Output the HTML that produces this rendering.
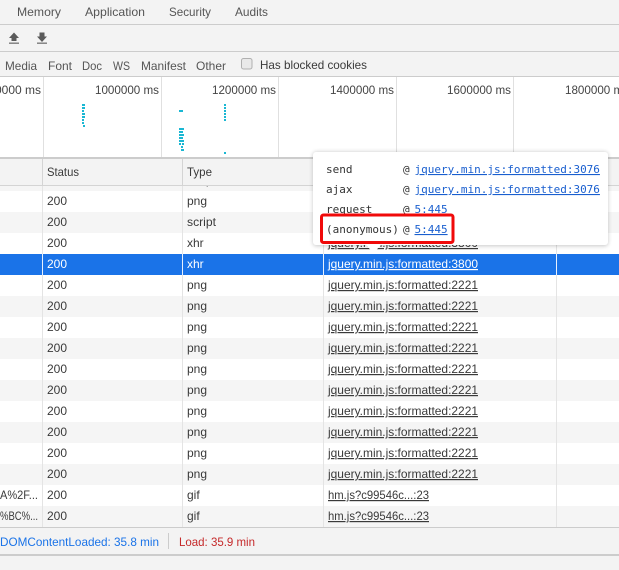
<!DOCTYPE html>
<html>
<head>
<meta charset="utf-8">
<style>
html,body{margin:0;padding:0;background:#f3f3f3;width:619px;height:570px;overflow:hidden}
svg{display:block}
text{font-family:"Liberation Sans",sans-serif;font-size:12px;fill:#444}
.t{fill:#3a3a3a}
.tab{fill:#555}
.u{text-decoration:underline;fill:#3a3a3a}
.m{font-family:"DejaVu Sans Mono",monospace;font-size:11px;fill:#333}
.l{font-family:"DejaVu Sans Mono",monospace;font-size:11px;fill:#1a5fcf;text-decoration:underline}
.w{fill:#fff}
</style>
</head>
<body>
<svg width="619" height="570" viewBox="0 0 619 570" xmlns="http://www.w3.org/2000/svg">
<defs>
<filter id="s" x="-10%" y="-20%" width="120%" height="140%"><feGaussianBlur stdDeviation="2"/></filter>
</defs>
<rect width="619" height="570" fill="#f3f3f3"/>

<!-- top tabs -->
<text class="tab" x="17" y="16" textLength="44" lengthAdjust="spacingAndGlyphs">Memory</text>
<text class="tab" x="85" y="16" textLength="60" lengthAdjust="spacingAndGlyphs">Application</text>
<text class="tab" x="169" y="16" textLength="42" lengthAdjust="spacingAndGlyphs">Security</text>
<text class="tab" x="235" y="16" textLength="33" lengthAdjust="spacingAndGlyphs">Audits</text>
<rect x="0" y="24" width="619" height="1" fill="#ccc"/>

<!-- toolbar -->
<path d="M14 32.5L19 38H16.5V41H11.5V38H9Z" fill="#5a5a5a"/>
<rect x="9" y="42.6" width="10" height="1.1" fill="#5a5a5a"/>
<path d="M39.5 32.5H44.5V36.5H47L42 42L37 36.5H39.5Z" fill="#5a5a5a"/>
<rect x="37" y="42.6" width="10" height="1.1" fill="#5a5a5a"/>
<rect x="0" y="51" width="619" height="1" fill="#ccc"/>

<!-- filter bar -->
<text class="tab" x="5" y="70" textLength="32" lengthAdjust="spacingAndGlyphs">Media</text>
<text class="tab" x="48" y="70" textLength="24" lengthAdjust="spacingAndGlyphs">Font</text>
<text class="tab" x="82" y="70" textLength="20" lengthAdjust="spacingAndGlyphs">Doc</text>
<text class="tab" x="113" y="70" textLength="17" lengthAdjust="spacingAndGlyphs">WS</text>
<text class="tab" x="141" y="70" textLength="45" lengthAdjust="spacingAndGlyphs">Manifest</text>
<text class="tab" x="196" y="70" textLength="30" lengthAdjust="spacingAndGlyphs">Other</text>
<rect x="241.5" y="58.5" width="10.5" height="10.5" rx="2" fill="#e9e9e9" stroke="#b0b0b0"/>
<text class="t" x="260" y="69" textLength="107" lengthAdjust="spacingAndGlyphs">Has blocked cookies</text>
<rect x="0" y="76" width="619" height="1" fill="#ccc"/>

<!-- timeline -->
<rect x="0" y="77" width="619" height="80" fill="#fff"/>
<g fill="#e0e0e0">
<rect x="43" y="77" width="1" height="80"/>
<rect x="161" y="77" width="1" height="80"/>
<rect x="278" y="77" width="1" height="80"/>
<rect x="396" y="77" width="1" height="80"/>
<rect x="513" y="77" width="1" height="80"/>
</g>
<text x="41" y="94" text-anchor="end">0000 ms</text>
<text x="95" y="94" textLength="64" lengthAdjust="spacingAndGlyphs">1000000 ms</text>
<text x="212" y="94" textLength="64" lengthAdjust="spacingAndGlyphs">1200000 ms</text>
<text x="330" y="94" textLength="64" lengthAdjust="spacingAndGlyphs">1400000 ms</text>
<text x="447" y="94" textLength="64" lengthAdjust="spacingAndGlyphs">1600000 ms</text>
<text x="565" y="94" textLength="64" lengthAdjust="spacingAndGlyphs">1800000 ms</text>
<g fill="#1ab7d3">
<rect x="82" y="104" width="3" height="2"/><rect x="82" y="107" width="3" height="2"/><rect x="82" y="110" width="2" height="2"/><rect x="82" y="113" width="3" height="2"/><rect x="82" y="116" width="3" height="2"/><rect x="82" y="119" width="2" height="2"/><rect x="82" y="122" width="2" height="2"/><rect x="83" y="125" width="2" height="2"/>
<rect x="179" y="110" width="4" height="2"/>
<rect x="179" y="128" width="5" height="2"/><rect x="179" y="131" width="4" height="2"/><rect x="179" y="134" width="5" height="2"/><rect x="179" y="137" width="4" height="2"/><rect x="179" y="140" width="5" height="2"/><rect x="179" y="143" width="2" height="2"/><rect x="182" y="143" width="2" height="2"/><rect x="181" y="146" width="2" height="2"/><rect x="181" y="149" width="3" height="2"/>
<rect x="224" y="104" width="2" height="2"/><rect x="224" y="107" width="2" height="2"/><rect x="224" y="110" width="2" height="2"/><rect x="224" y="113" width="2" height="2"/><rect x="224" y="116" width="2" height="2"/><rect x="224" y="119" width="2" height="2"/>
<rect x="224" y="152" width="2" height="2"/>
</g>

<!-- table rows -->
<rect x="0" y="186" width="619" height="5" fill="#f5f5f5"/>
<text class="t" x="187" y="184" textLength="29" lengthAdjust="spacingAndGlyphs">script</text>
<rect x="0" y="191" width="619" height="336" fill="#fff"/>
<g fill="#f5f5f5">
<rect x="0" y="212" width="619" height="21"/>
<rect x="0" y="296" width="619" height="21"/>
<rect x="0" y="338" width="619" height="21"/>
<rect x="0" y="380" width="619" height="21"/>
<rect x="0" y="422" width="619" height="21"/>
<rect x="0" y="464" width="619" height="21"/>
<rect x="0" y="506" width="619" height="21"/>
</g>
<rect x="0" y="254" width="619" height="21" fill="#1a73e8"/>
<g fill="#e4e4e4">
<rect x="42" y="186" width="1" height="68"/><rect x="42" y="275" width="1" height="252"/>
<rect x="182" y="186" width="1" height="68"/><rect x="182" y="275" width="1" height="252"/>
<rect x="323" y="186" width="1" height="68"/><rect x="323" y="275" width="1" height="252"/>
<rect x="556" y="186" width="1" height="68"/><rect x="556" y="275" width="1" height="252"/>
</g>
<g fill="#e8f0fd">
<rect x="42" y="254" width="1" height="21"/><rect x="182" y="254" width="1" height="21"/><rect x="323" y="254" width="1" height="21"/><rect x="556" y="254" width="1" height="21"/>
</g>

<!-- header -->
<rect x="0" y="157" width="619" height="2" fill="#ccc"/>
<rect x="0" y="159" width="619" height="26" fill="#f3f3f3"/>
<rect x="0" y="185" width="619" height="1" fill="#d4d4d4"/>
<g fill="#d4d4d4">
<rect x="42" y="159" width="1" height="26"/><rect x="182" y="159" width="1" height="26"/><rect x="323" y="159" width="1" height="26"/><rect x="556" y="159" width="1" height="26"/>
</g>
<text class="t" x="47" y="176" textLength="32" lengthAdjust="spacingAndGlyphs">Status</text>
<text class="t" x="187" y="176" textLength="25" lengthAdjust="spacingAndGlyphs">Type</text>

<!-- status -->
<text class="t" x="47" y="205">200</text>
<text class="t" x="47" y="226">200</text>
<text class="t" x="47" y="247">200</text>
<text class="w" x="47" y="268">200</text>
<text class="t" x="47" y="289">200</text>
<text class="t" x="47" y="310">200</text>
<text class="t" x="47" y="331">200</text>
<text class="t" x="47" y="352">200</text>
<text class="t" x="47" y="373">200</text>
<text class="t" x="47" y="394">200</text>
<text class="t" x="47" y="415">200</text>
<text class="t" x="47" y="436">200</text>
<text class="t" x="47" y="457">200</text>
<text class="t" x="47" y="478">200</text>
<text class="t" x="47" y="499">200</text>
<text class="t" x="47" y="520">200</text>

<!-- type -->
<text class="t" x="187" y="205">png</text>
<text class="t" x="187" y="226" textLength="29" lengthAdjust="spacingAndGlyphs">script</text>
<text class="t" x="187" y="247">xhr</text>
<text class="w" x="187" y="268">xhr</text>
<text class="t" x="187" y="289">png</text>
<text class="t" x="187" y="310">png</text>
<text class="t" x="187" y="331">png</text>
<text class="t" x="187" y="352">png</text>
<text class="t" x="187" y="373">png</text>
<text class="t" x="187" y="394">png</text>
<text class="t" x="187" y="415">png</text>
<text class="t" x="187" y="436">png</text>
<text class="t" x="187" y="457">png</text>
<text class="t" x="187" y="478">png</text>
<text class="t" x="187" y="499">gif</text>
<text class="t" x="187" y="520">gif</text>

<!-- initiator -->
<text class="u" x="328" y="247" textLength="150" lengthAdjust="spacingAndGlyphs">jquery.min.js:formatted:3800</text>
<text class="u" style="fill:#fff" x="328" y="268" textLength="150" lengthAdjust="spacingAndGlyphs">jquery.min.js:formatted:3800</text>
<text class="u" x="328" y="289" textLength="150" lengthAdjust="spacingAndGlyphs">jquery.min.js:formatted:2221</text>
<text class="u" x="328" y="310" textLength="150" lengthAdjust="spacingAndGlyphs">jquery.min.js:formatted:2221</text>
<text class="u" x="328" y="331" textLength="150" lengthAdjust="spacingAndGlyphs">jquery.min.js:formatted:2221</text>
<text class="u" x="328" y="352" textLength="150" lengthAdjust="spacingAndGlyphs">jquery.min.js:formatted:2221</text>
<text class="u" x="328" y="373" textLength="150" lengthAdjust="spacingAndGlyphs">jquery.min.js:formatted:2221</text>
<text class="u" x="328" y="394" textLength="150" lengthAdjust="spacingAndGlyphs">jquery.min.js:formatted:2221</text>
<text class="u" x="328" y="415" textLength="150" lengthAdjust="spacingAndGlyphs">jquery.min.js:formatted:2221</text>
<text class="u" x="328" y="436" textLength="150" lengthAdjust="spacingAndGlyphs">jquery.min.js:formatted:2221</text>
<text class="u" x="328" y="457" textLength="150" lengthAdjust="spacingAndGlyphs">jquery.min.js:formatted:2221</text>
<text class="u" x="328" y="478" textLength="150" lengthAdjust="spacingAndGlyphs">jquery.min.js:formatted:2221</text>
<text class="u" x="328" y="499" textLength="101" lengthAdjust="spacingAndGlyphs">hm.js?c99546c...:23</text>
<text class="u" x="328" y="520" textLength="101" lengthAdjust="spacingAndGlyphs">hm.js?c99546c...:23</text>

<!-- truncated names -->
<text class="t" x="0" y="499" textLength="38" lengthAdjust="spacingAndGlyphs">A%2F...</text>
<text class="t" x="0" y="520" textLength="38" lengthAdjust="spacingAndGlyphs">%BC%...</text>

<!-- status bar -->
<rect x="0" y="527" width="619" height="1" fill="#ccc"/>
<rect x="0" y="528" width="619" height="26" fill="#f3f3f3"/>
<text style="fill:#1a73e8" x="0" y="546" textLength="159" lengthAdjust="spacingAndGlyphs">DOMContentLoaded: 35.8 min</text>
<rect x="168" y="533" width="1" height="16" fill="#ccc"/>
<text style="fill:#c5292a" x="179" y="546" textLength="76" lengthAdjust="spacingAndGlyphs">Load: 35.9 min</text>
<rect x="0" y="554" width="619" height="2" fill="#ccc"/>

<!-- tooltip -->
<rect x="313" y="152" width="295" height="94" rx="3" fill="#000" opacity=".22" filter="url(#s)"/>
<path d="M366 245H381L373.5 253Z" fill="#fff"/>
<rect x="313" y="152" width="295" height="93" rx="3" fill="#fff"/>
<text class="m" x="326" y="173">send</text>
<text class="m" x="403" y="173">@</text>
<text class="l" x="414.5" y="173">jquery.min.js:formatted:3076</text>
<text class="m" x="326" y="193">ajax</text>
<text class="m" x="403" y="193">@</text>
<text class="l" x="414.5" y="193">jquery.min.js:formatted:3076</text>
<text class="m" x="326" y="213">request</text>
<text class="m" x="403" y="213">@</text>
<text class="l" x="414.5" y="213">5:445</text>
<text class="m" x="326" y="233">(anonymous)</text>
<text class="m" x="403" y="233">@</text>
<text class="l" x="414.5" y="233">5:445</text>
<rect x="321.5" y="215" width="131.5" height="27.5" rx="2" fill="none" stroke="#f00a0a" stroke-width="3"/>
</svg>
</body>
</html>
